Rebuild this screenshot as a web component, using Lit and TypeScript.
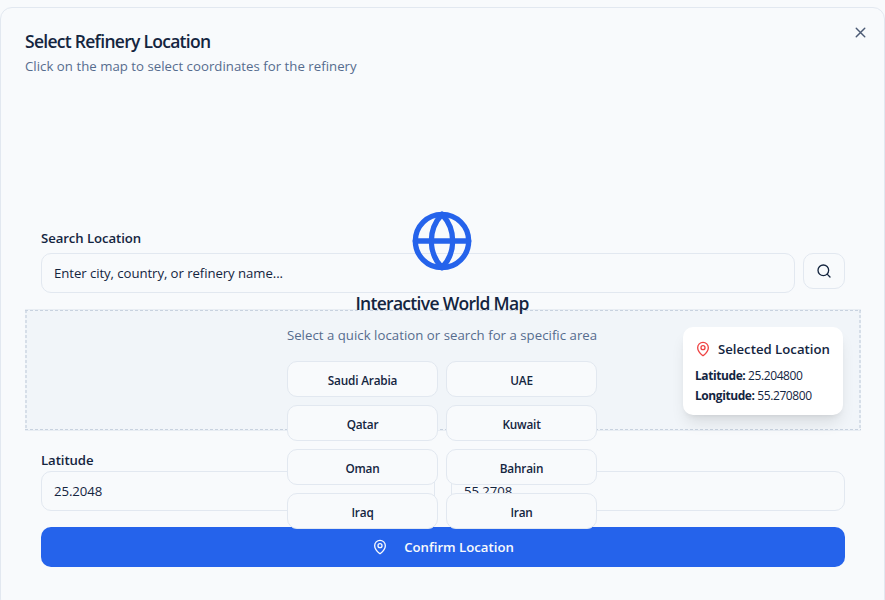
import { LitElement, html, css, svg } from "lit";
import { customElement, state } from "lit/decorators.js";

const pin = html`<svg class="pin" viewBox="0 0 24 24">${svg`<path d="M20 10c0 4.993-5.539 10.193-7.399 11.799a1 1 0 0 1-1.202 0C9.539 20.193 4 14.993 4 10a8 8 0 0 1 16 0"/><circle cx="12" cy="10" r="3"/>`}</svg>`;

@customElement("app-root")
export class AppRoot extends LitElement {
  @state() private lat = 25.2048;
  @state() private lng = 55.2708;
  private places = ["Saudi Arabia", "UAE", "Qatar", "Kuwait", "Oman", "Bahrain", "Iraq", "Iran"];

  static styles = css`
    :host {
      display: block;
      height: 600px;
      overflow: hidden;
      box-sizing: border-box;
      padding-top: 7px;
      background: #f8fafc;
      color: #14253f;
      font: 13.2px/20px "Open Sans", "Noto Sans", sans-serif;
    }
    * { box-sizing: border-box; }
    svg { fill: none; stroke: currentColor; stroke-width: 2; stroke-linecap: round; stroke-linejoin: round; display: block; flex: none; }
    h2, h3, p { margin: 0; white-space: nowrap; }
    .dialog { position: relative; height: 604px; border: 1px solid #e2e8f0; border-radius: 12px; background: #f8fafc; padding: 23px 23px 24px 24px; }
    .close { position: absolute; right: 15px; top: 16px; width: 17px; height: 16px; color: #4b5a74; }
    .close svg { width: 17px; height: 17px; }
    .title { font-size: 17.5px; line-height: 20px; font-weight: 600; letter-spacing: -0.72px; }
    .desc { margin-top: 5px; color: #566c8e; letter-spacing: 0.035px; }
    .search { margin-top: 152px; padding: 0 16px; }
    .label { font-weight: 600; letter-spacing: -0.08px; white-space: nowrap; }
    .row { display: flex; gap: 8px; align-items: flex-start; margin-top: 5px; }
    .input { flex: 1; height: 40px; border: 1px solid #e2e8f0; border-radius: 10px; padding: 9px 12px; white-space: nowrap; background: #f8fafc; letter-spacing: -0.07px; }
    .icon-btn { width: 42px; height: 36px; border: 1px solid #e2e8f0; border-radius: 10px; display: grid; place-items: center; }
    .icon-btn svg { width: 16px; height: 16px; }
    .map { position: relative; z-index: 1; height: 122px; margin-top: 16px; border: 1px solid #e8edf3; border-width: 1px 0; background: #f1f5f9; display: flex; align-items: center; justify-content: center; }
    .map::before {
      content: ""; position: absolute; inset: 0;
      background:
        repeating-linear-gradient(90deg, #c8d2df 0 3px, transparent 3px 5px) top / 100% 1px no-repeat,
        repeating-linear-gradient(90deg, #c8d2df 0 3px, transparent 3px 5px) bottom / 100% 1px no-repeat,
        repeating-linear-gradient(#d6dee8 0 3px, transparent 3px 5px) left / 2px 100% no-repeat,
        repeating-linear-gradient(#d6dee8 0 3px, transparent 3px 5px) right / 2px 100% no-repeat;
    }
    .world { position: relative; width: 310px; flex: none; display: flex; flex-direction: column; align-items: center; margin: 0 2px 2px 0; }
    .globe { width: 64px; height: 64px; color: #2563eb; }
    .heading { margin-top: 16px; font-size: 17.5px; line-height: 28px; font-weight: 600; letter-spacing: -0.7px; }
    .sub { margin-top: 8px; color: #566c8e; letter-spacing: 0.035px; }
    .places { margin-top: 16px; width: 310px; display: grid; grid-template-columns: 1fr 1fr; gap: 8px; }
    .place { height: 36px; border: 1px solid #e2e8f0; border-radius: 10px; background: #f8fafc; display: flex; align-items: center; justify-content: center; padding-top: 2px; font-size: 11.8px; font-weight: 600; letter-spacing: -0.2px; }
    .picked { position: absolute; top: 17px; right: 18px; width: 160px; height: 88px; padding: 12px; border-radius: 10px; background: #fff; box-shadow: 0 10px 15px -3px rgba(0,0,0,.1), 0 4px 6px -4px rgba(0,0,0,.1); white-space: nowrap; }
    .picked-title { display: flex; align-items: center; gap: 7px; font-weight: 600; margin-bottom: 7px; }
    .picked-title svg { width: 16px; height: 16px; color: #ef4444; }
    .coord { font-size: 12px; letter-spacing: -0.4px; }
    .coord b { font-weight: 700; letter-spacing: -0.42px; }
    .fields { display: flex; gap: 16px; margin-top: 19px; padding: 0 16px; }
    .field { flex: 1; display: flex; flex-direction: column; }
    .field .input { flex: none; margin-top: 1px; }
    .confirm { margin: 16px 16px 0; height: 40px; border-radius: 10px; background: #2563eb; color: #f8fafc; display: flex; align-items: center; justify-content: center; gap: 16px; font-weight: 600; }
    .confirm svg { width: 16px; height: 16px; }
  `;

  render() {
    return html`
      <div class="dialog">
        <h2 class="title">Select Refinery Location</h2>
        <p class="desc">Click on the map to select coordinates for the refinery</p>
        <div class="close"><svg viewBox="0 0 24 24"><path d="M18 6 6 18M6 6l12 12"/></svg></div>
        <div class="search">
          <div class="label">Search Location</div>
          <div class="row">
            <div class="input">Enter city, country, or refinery name...</div>
            <div class="icon-btn"><svg viewBox="0 0 24 24"><circle cx="11" cy="11" r="8"/><path d="m21 21-4.3-4.3"/></svg></div>
          </div>
        </div>
        <div class="map">
          <div class="world">
            <svg class="globe" viewBox="0 0 24 24"><circle cx="12" cy="12" r="10"/><path d="M12 2a14.5 14.5 0 0 0 0 20 14.5 14.5 0 0 0 0-20M2 12h20"/></svg>
            <h3 class="heading">Interactive World Map</h3>
            <p class="sub">Select a quick location or search for a specific area</p>
            <div class="places">${this.places.map((p) => html`<div class="place">${p}</div>`)}</div>
          </div>
          <div class="picked">
            <div class="picked-title">${pin}<span>Selected Location</span></div>
            <div class="coord"><b>Latitude:</b> ${this.lat.toFixed(6)}</div>
            <div class="coord"><b>Longitude:</b> ${this.lng.toFixed(6)}</div>
          </div>
        </div>
        <div class="fields">
          <div class="field"><div class="label">Latitude</div><div class="input">${this.lat}</div></div>
          <div class="field"><div class="label">Longitude</div><div class="input">${this.lng}</div></div>
        </div>
        <div class="confirm">${pin}<span>Confirm Location</span></div>
      </div>
    `;
  }
}
